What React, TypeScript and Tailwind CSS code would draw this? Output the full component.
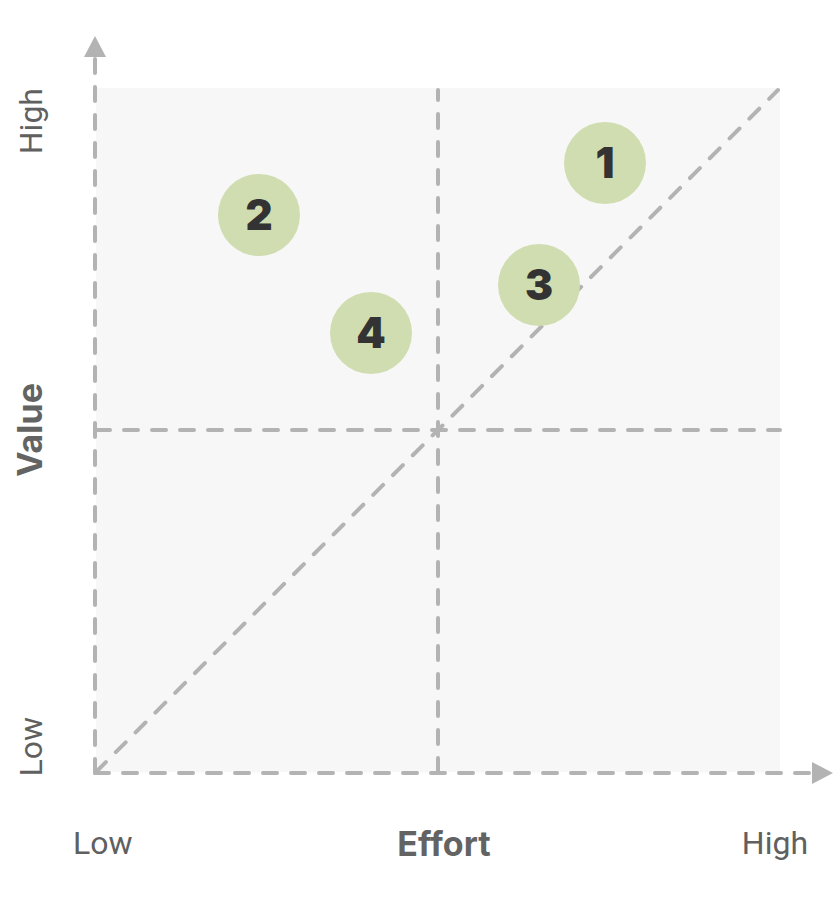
import React from 'react';

type Item = { id: number; x: number; y: number };

// page coordinates of each initiative bubble (centre)
const items: Item[] = [
  { id: 1, x: 605, y: 163 },
  { id: 2, x: 259, y: 215 },
  { id: 3, x: 539, y: 285 },
  { id: 4, x: 371, y: 333 },
];

const CHART_LEFT = 62;
const R = 41;

const line = '#b3b3b3';

function Chart() {
  return (
    <div className="relative h-[790px] flex-1">
      <svg className="block" width={778} height={790} viewBox="62 0 778 790">
        <rect x={96} y={88} width={684} height={684} fill="#f7f7f7" />
        <g stroke={line} strokeWidth={4} strokeDasharray="14 14" strokeLinecap="round" fill="none">
          {/* quadrant dividers */}
          <line x1={438} y1={772} x2={438} y2={90} />
          <line x1={96} y1={430} x2={780} y2={430} />
          {/* diagonal */}
          <line x1={96} y1={772} x2={778} y2={90} />
          {/* axes */}
          <line x1={95} y1={773} x2={95} y2={58} />
          <line x1={95} y1={773} x2={812} y2={773} />
        </g>
        <polygon points="95,36 84,57 106,57" fill={line} />
        <polygon points="833,773 812,762 812,784" fill={line} />
      </svg>

      {items.map((it) => (
        <div
          key={it.id}
          className="absolute flex h-[82px] w-[82px] items-center justify-center rounded-full bg-[#d0ddb0] font-['Inter',sans-serif] text-[42px] leading-none font-black text-[#333333]"
          style={{ left: it.x - CHART_LEFT - R, top: it.y - R }}
        >
          {it.id}
        </div>
      ))}
    </div>
  );
}

export default function App() {
  const axisLabel = "font-['Roboto',sans-serif] text-[32px] leading-none text-[#606060]";
  const axisTitle = "font-['Inter',sans-serif] text-[34px] leading-none font-bold text-[#636363]";

  return (
    <div className="h-[908px] w-[840px] overflow-hidden bg-white">
      <div className="flex">
        {/* value axis labels */}
        <div className="grid h-[790px] w-[62px] grid-rows-[1fr_auto_1fr] justify-items-center pt-[88px] pb-[18px]">
          <span className={`${axisLabel} self-start rotate-180 [writing-mode:vertical-rl]`}>High</span>
          <span className={`${axisTitle} mr-[3px] rotate-180 [writing-mode:vertical-rl]`}>Value</span>
          <span className={`${axisLabel} -mb-[5px] self-end rotate-180 [writing-mode:vertical-rl]`}>Low</span>
        </div>
        <Chart />
      </div>

      {/* effort axis labels */}
      <div className="grid grid-cols-[1fr_auto_1fr] items-start pt-[37px]">
        <span className={`${axisLabel} ml-[73px] justify-self-start`}>Low</span>
        <span className={`${axisTitle} ml-[48px]`}>Effort</span>
        <span className={`${axisLabel} mr-[32px] justify-self-end`}>High</span>
      </div>
    </div>
  );
}
